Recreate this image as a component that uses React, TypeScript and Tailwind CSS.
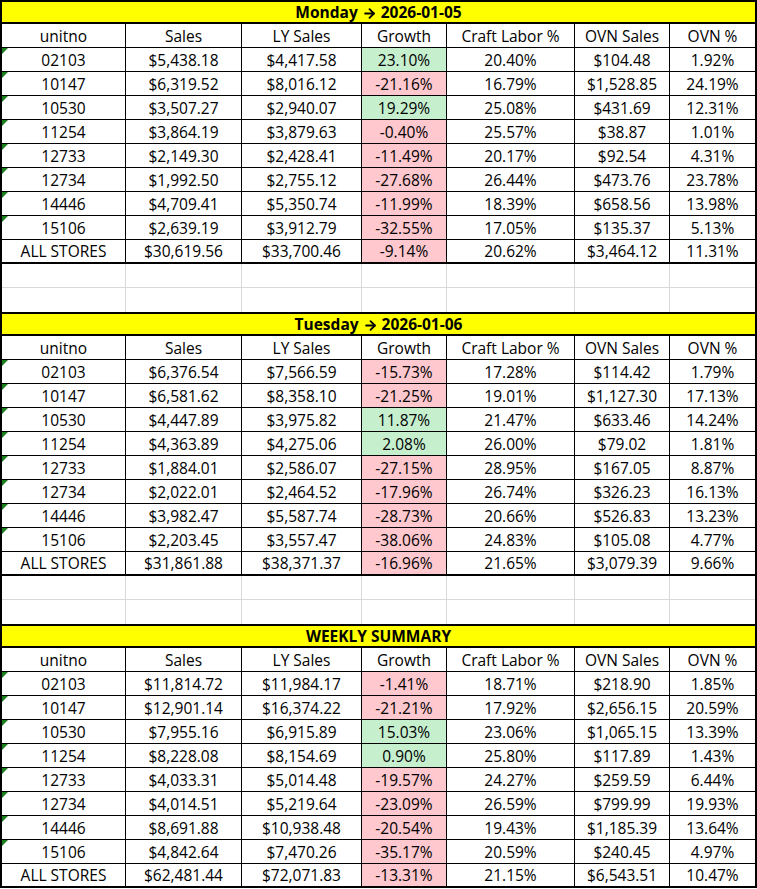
import React from "react";
import { ArrowRight } from "lucide-react";

type Row = [string, string, string, string, string, string, string];

const sections: { day?: string; date?: string; title?: string; rows: Row[] }[] = [
  {
    day: "Monday",
    date: "2026-01-05",
    rows: [
      ["02103", "$5,438.18", "$4,417.58", "23.10%", "20.40%", "$104.48", "1.92%"],
      ["10147", "$6,319.52", "$8,016.12", "-21.16%", "16.79%", "$1,528.85", "24.19%"],
      ["10530", "$3,507.27", "$2,940.07", "19.29%", "25.08%", "$431.69", "12.31%"],
      ["11254", "$3,864.19", "$3,879.63", "-0.40%", "25.57%", "$38.87", "1.01%"],
      ["12733", "$2,149.30", "$2,428.41", "-11.49%", "20.17%", "$92.54", "4.31%"],
      ["12734", "$1,992.50", "$2,755.12", "-27.68%", "26.44%", "$473.76", "23.78%"],
      ["14446", "$4,709.41", "$5,350.74", "-11.99%", "18.39%", "$658.56", "13.98%"],
      ["15106", "$2,639.19", "$3,912.79", "-32.55%", "17.05%", "$135.37", "5.13%"],
      ["ALL STORES", "$30,619.56", "$33,700.46", "-9.14%", "20.62%", "$3,464.12", "11.31%"],
    ],
  },
  {
    day: "Tuesday",
    date: "2026-01-06",
    rows: [
      ["02103", "$6,376.54", "$7,566.59", "-15.73%", "17.28%", "$114.42", "1.79%"],
      ["10147", "$6,581.62", "$8,358.10", "-21.25%", "19.01%", "$1,127.30", "17.13%"],
      ["10530", "$4,447.89", "$3,975.82", "11.87%", "21.47%", "$633.46", "14.24%"],
      ["11254", "$4,363.89", "$4,275.06", "2.08%", "26.00%", "$79.02", "1.81%"],
      ["12733", "$1,884.01", "$2,586.07", "-27.15%", "28.95%", "$167.05", "8.87%"],
      ["12734", "$2,022.01", "$2,464.52", "-17.96%", "26.74%", "$326.23", "16.13%"],
      ["14446", "$3,982.47", "$5,587.74", "-28.73%", "20.66%", "$526.83", "13.23%"],
      ["15106", "$2,203.45", "$3,557.47", "-38.06%", "24.83%", "$105.08", "4.77%"],
      ["ALL STORES", "$31,861.88", "$38,371.37", "-16.96%", "21.65%", "$3,079.39", "9.66%"],
    ],
  },
  {
    title: "WEEKLY SUMMARY",
    rows: [
      ["02103", "$11,814.72", "$11,984.17", "-1.41%", "18.71%", "$218.90", "1.85%"],
      ["10147", "$12,901.14", "$16,374.22", "-21.21%", "17.92%", "$2,656.15", "20.59%"],
      ["10530", "$7,955.16", "$6,915.89", "15.03%", "23.06%", "$1,065.15", "13.39%"],
      ["11254", "$8,228.08", "$8,154.69", "0.90%", "25.80%", "$117.89", "1.43%"],
      ["12733", "$4,033.31", "$5,014.48", "-19.57%", "24.27%", "$259.59", "6.44%"],
      ["12734", "$4,014.51", "$5,219.64", "-23.09%", "26.59%", "$799.99", "19.93%"],
      ["14446", "$8,691.88", "$10,938.48", "-20.54%", "19.43%", "$1,185.39", "13.64%"],
      ["15106", "$4,842.64", "$7,470.26", "-35.17%", "20.59%", "$240.45", "4.97%"],
      ["ALL STORES", "$62,481.44", "$72,071.83", "-13.31%", "21.15%", "$6,543.51", "10.47%"],
    ],
  },
];

const headers = ["unitno", "Sales", "LY Sales", "Growth", "Craft Labor %", "OVN Sales", "OVN %"];

const widths = [
  "w-[124px]",
  "w-[116px]",
  "w-[120px]",
  "w-[85px]",
  "w-[128px]",
  "w-[95px]",
  "w-[85px]",
];

function Cell({
  i,
  children,
  fill,
  flag,
  gray,
}: {
  i: number;
  children?: React.ReactNode;
  fill?: string;
  flag?: boolean;
  gray?: boolean;
}) {
  const last = i === 6;
  return (
    <div
      className={`relative flex h-full shrink-0 items-center justify-center ${widths[i]} ${
        last ? "" : gray ? "border-r border-[#d9d9d9]" : "border-r border-black"
      } ${fill ?? ""}`}
    >
      {flag && (
        <div className="absolute left-0 top-0 h-0 w-0 border-r-[6px] border-t-[6px] border-r-transparent border-t-[#1a7f1a]" />
      )}
      <span className="whitespace-nowrap pt-[2px] leading-none">{children}</span>
    </div>
  );
}

function Section({
  day,
  date,
  title,
  rows,
  last,
}: {
  day?: string;
  date?: string;
  title?: string;
  rows: Row[];
  last: boolean;
}) {
  return (
    <div className="flex flex-col">
      <div className="flex h-[24px] items-center justify-center border-y-2 border-black bg-[#ffff00] font-bold">
        {title ? (
          <span className="whitespace-nowrap pt-[2px] leading-none">{title}</span>
        ) : (
          <div className="flex items-center gap-[4px] whitespace-nowrap pt-[2px] leading-none">
            <span>{day}</span>
            <ArrowRight size={15} strokeWidth={3} role="img" aria-label="→" />
            <span>{date}</span>
          </div>
        )}
      </div>
      <div className="flex h-[24px] border-b border-black">
        {headers.map((h, i) => (
          <Cell key={h} i={i}>
            {h}
          </Cell>
        ))}
      </div>
      {rows.map((r, ri) => {
        const isTotal = r[0] === "ALL STORES";
        return (
          <div
            key={ri}
            className={`flex h-[24px] ${isTotal ? "border-b-2" : "border-b"} border-black`}
          >
            {r.map((v, i) => {
              let fill: string | undefined;
              if (i === 3) fill = v.startsWith("-") ? "bg-[#ffc7ce]" : "bg-[#c6efce]";
              return (
                <Cell key={i} i={i} fill={fill} flag={i === 0 && !isTotal}>
                  {v}
                </Cell>
              );
            })}
          </div>
        );
      })}
      {!last && (
        <>
          <div className="flex h-[24px] border-b border-[#d9d9d9]">
            {headers.map((h, i) => (
              <Cell key={h} i={i} gray />
            ))}
          </div>
          <div className="flex h-[24px]">
            {headers.map((h, i) => (
              <Cell key={h} i={i} gray />
            ))}
          </div>
        </>
      )}
    </div>
  );
}

export default function App() {
  return (
    <div
      className="w-[757px] h-[889px] overflow-hidden bg-white text-[15.5px] text-black"
      style={{ fontFamily: '"Open Sans", "Liberation Sans", sans-serif' }}
    >
      <div className="flex flex-col border-x-2 border-black">
        {sections.map((s, si) => (
          <Section
            key={si}
            day={s.day}
            date={s.date}
            title={s.title}
            rows={s.rows}
            last={si === sections.length - 1}
          />
        ))}
      </div>
    </div>
  );
}
